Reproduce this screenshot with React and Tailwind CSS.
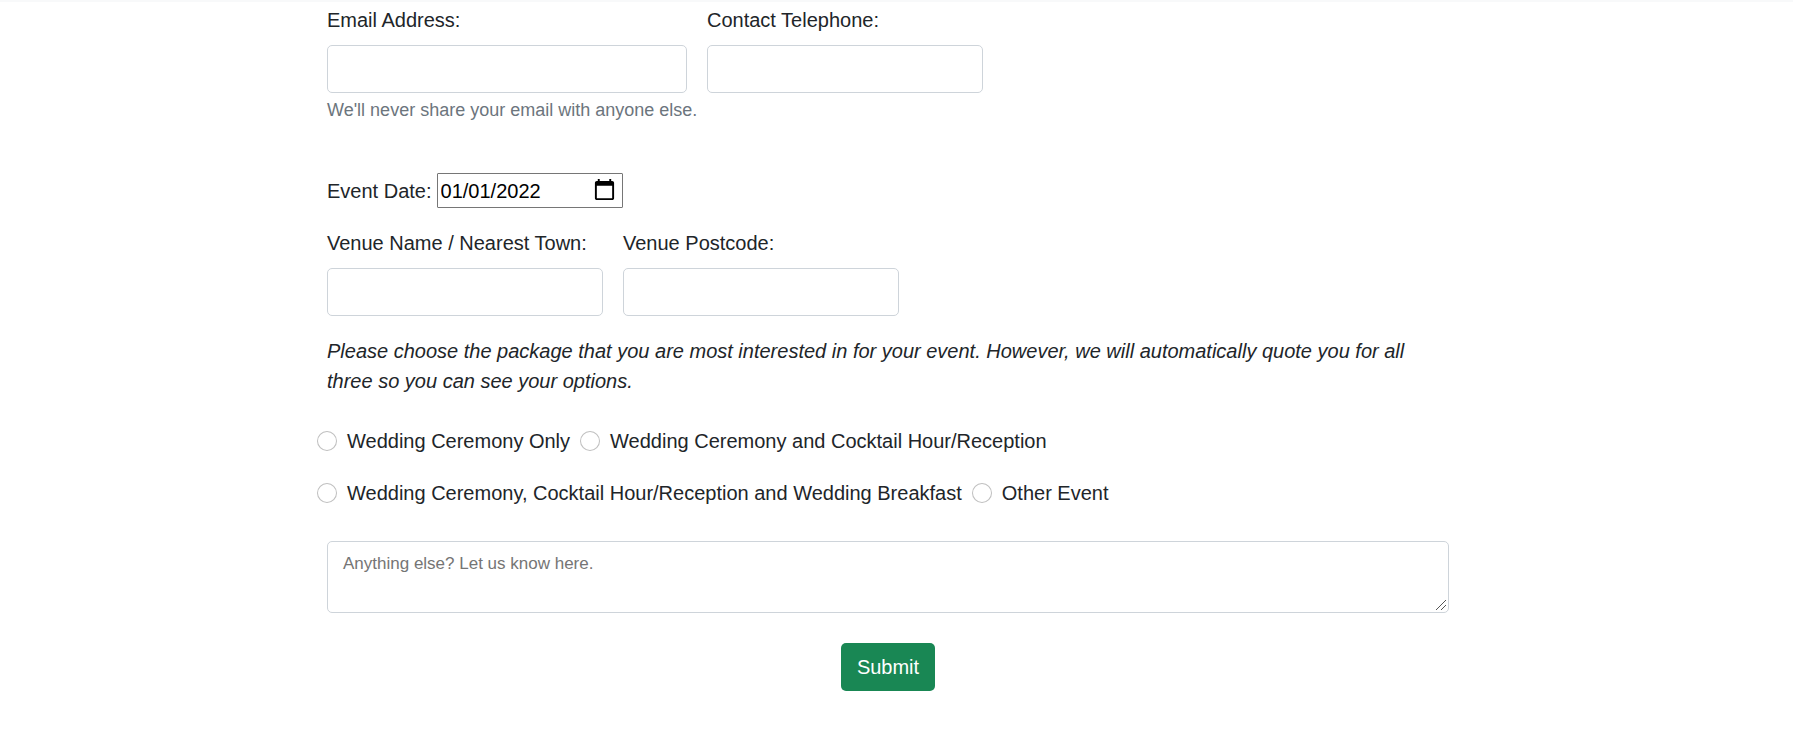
const fieldClass =
  "block h-12 w-full rounded-[5px] border border-[#ced4da] bg-white px-4 text-[20px] leading-[30px] text-[#212529]";

function Field({ id, label, type = "text", hint, className }) {
  return (
    <div className={className}>
      <label htmlFor={id} className="mb-[10px] block">
        {label}
      </label>
      <input id={id} type={type} className={fieldClass} />
      {hint && (
        <p className="mt-1 text-[18px] leading-[26px] whitespace-nowrap text-[#6c757d]">
          {hint}
        </p>
      )}
    </div>
  );
}

function PackageOption({ id, label }) {
  return (
    <div className="flex items-center gap-[10px]">
      <input
        id={id}
        type="radio"
        name="package"
        className="size-5 shrink-0 appearance-none rounded-full border border-black/25 bg-white checked:border-[6px] checked:border-[#0d6efd]"
      />
      <label htmlFor={id}>{label}</label>
    </div>
  );
}

export default function App() {
  return (
    <main className="border-t-2 border-[#f8f9fa] bg-white pr-[17px] font-['Liberation_Sans',Arial,sans-serif] text-[20px] leading-[30px] text-[#212529]">
      <form className="mx-auto max-w-[1122px] pt-[3px] pb-11" onSubmit={(e) => e.preventDefault()}>
        <div className="flex flex-wrap gap-5">
          <Field
            id="email"
            label="Email Address:"
            type="email"
            hint="We'll never share your email with anyone else."
            className="w-[360px]"
          />
          <Field id="telephone" label="Contact Telephone:" type="tel" className="w-[276px]" />
        </div>

        <div className="mt-[50px] flex items-center gap-[5px]">
          <label htmlFor="event-date">Event Date:</label>
          <input
            id="event-date"
            type="date"
            defaultValue="2022-01-01"
            className="h-[35px] w-[186px] rounded-[1px] border border-[#767676] bg-white px-[3px] text-black [&::-webkit-calendar-picker-indicator]:size-[25px] [&::-webkit-datetime-edit-day-field]:p-0 [&::-webkit-datetime-edit-month-field]:p-0 [&::-webkit-datetime-edit-year-field]:p-0"
          />
        </div>

        <div className="mt-5 flex flex-wrap gap-5">
          <Field id="venue" label="Venue Name / Nearest Town:" className="w-[276px]" />
          <Field id="postcode" label="Venue Postcode:" className="w-[276px]" />
        </div>

        <p className="mt-5 italic">
          Please choose the package that you are most interested in for your event. However, we will
          automatically quote you for all three so you can see your options.
        </p>

        <div className="mt-[30px] -ml-[10px] flex flex-col gap-[22px]">
          <div className="flex flex-wrap gap-x-[10px]">
            <PackageOption id="ceremony" label="Wedding Ceremony Only" />
            <PackageOption
              id="ceremony-reception"
              label="Wedding Ceremony and Cocktail Hour/Reception"
            />
          </div>
          <div className="flex flex-wrap gap-x-[10px]">
            <PackageOption
              id="full-day"
              label="Wedding Ceremony, Cocktail Hour/Reception and Wedding Breakfast"
            />
            <PackageOption id="other" label="Other Event" />
          </div>
        </div>

        <div className="relative mt-[33px]">
          <textarea
            aria-label="Anything else"
            placeholder="Anything else? Let us know here."
            className="block h-[72px] w-full resize-none rounded-[5px] border border-[#ced4da] bg-white px-[15px] py-2 text-[17px] leading-[28px] text-[#212529] placeholder:text-[#757575]"
          />
          <svg
            aria-hidden="true"
            viewBox="0 0 10 10"
            className="pointer-events-none absolute right-[3px] bottom-[3px] size-[10px]"
            fill="none"
            stroke="#555"
            strokeWidth="1"
          >
            <path d="M0 10 10 0M5 10 10 5" />
          </svg>
        </div>

        <div className="mt-[30px] flex justify-center">
          <button
            type="submit"
            className="h-12 rounded-[5px] bg-[#198754] px-4 text-white"
          >
            Submit
          </button>
        </div>
      </form>
    </main>
  );
}
